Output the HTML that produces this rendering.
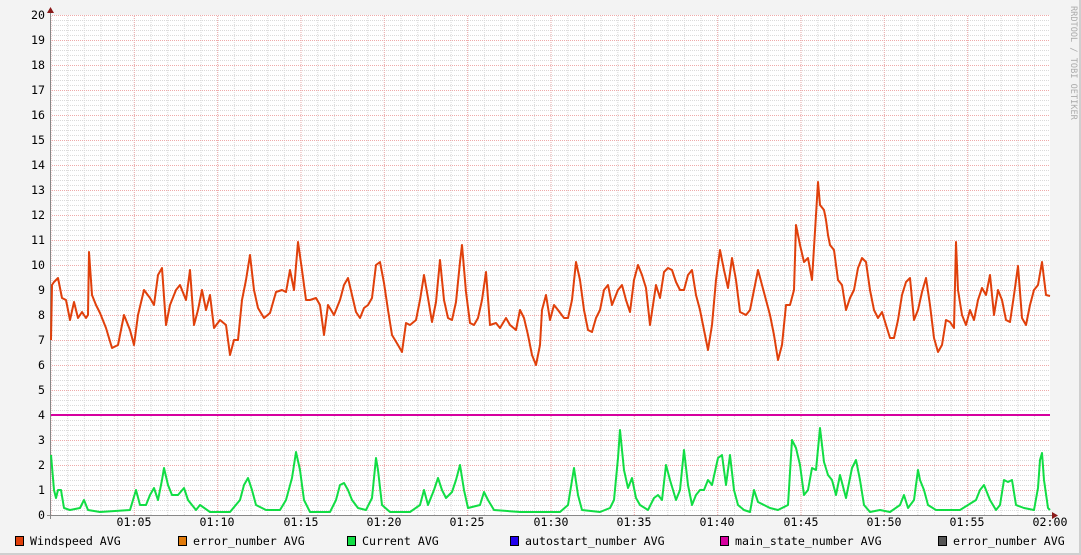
<!DOCTYPE html>
<html><head><meta charset="utf-8"><style>
html,body{margin:0;padding:0;background:#f3f3f3}
svg{display:block}
text{font-family:"DejaVu Sans Mono","Liberation Mono",monospace;font-size:11.6px;fill:#000}
</style></head><body>
<svg width="1081" height="555" viewBox="0 0 1081 555" xmlns="http://www.w3.org/2000/svg">
<defs>
<pattern id="hmin" x="0" y="15" width="1000" height="5" patternUnits="userSpaceOnUse"><line x1="0" y1="0.5" x2="1000" y2="0.5" stroke="#dadada" stroke-width="1" stroke-dasharray="1,1"/></pattern>
<pattern id="vmin" x="50.5" y="0" width="16.67" height="600" patternUnits="userSpaceOnUse"><line x1="0.5" y1="0" x2="0.5" y2="600" stroke="#dadada" stroke-width="1" stroke-dasharray="1,1"/></pattern>
<pattern id="hmaj" x="0" y="15" width="1000" height="25" patternUnits="userSpaceOnUse"><line x1="0" y1="0.5" x2="1000" y2="0.5" stroke="#eeaaaa" stroke-width="1" stroke-dasharray="1,1"/></pattern>
<pattern id="vmaj" x="50.5" y="0" width="83.33" height="600" patternUnits="userSpaceOnUse"><line x1="0.5" y1="0" x2="0.5" y2="600" stroke="#eeaaaa" stroke-width="1" stroke-dasharray="1,1"/></pattern>
</defs>
<rect x="0" y="0" width="1081" height="555" fill="#f3f3f3"/>
<line x1="1080" y1="0" x2="1080" y2="555" stroke="#cfcfcf" stroke-width="2"/>
<line x1="0" y1="554" x2="1081" y2="554" stroke="#cfcfcf" stroke-width="2"/>
<rect x="51" y="15" width="999" height="500" fill="#fff"/>
<rect x="51" y="15" width="999" height="500" fill="url(#hmin)"/>
<rect x="51" y="15" width="999" height="500" fill="url(#vmin)"/>
<rect x="51" y="15" width="999" height="500" fill="url(#hmaj)"/>
<rect x="51" y="15" width="999" height="500" fill="url(#vmaj)"/>
<g stroke="#888" stroke-width="1">
<line x1="50.5" y1="10" x2="50.5" y2="519"/>
<line x1="47" y1="515.5" x2="1054" y2="515.5"/>
</g>
<polygon points="47,13 54,13 50.5,7" fill="#8b1a1a"/>
<polygon points="1052,512 1052,519 1058,515.5" fill="#8b1a1a"/>
<g text-anchor="end">
<text x="45" y="19">20</text><text x="45" y="44">19</text><text x="45" y="69">18</text><text x="45" y="94">17</text><text x="45" y="119">16</text><text x="45" y="144">15</text><text x="45" y="169">14</text><text x="45" y="194">13</text><text x="45" y="219">12</text><text x="45" y="244">11</text><text x="45" y="269">10</text><text x="45" y="294">9</text><text x="45" y="319">8</text><text x="45" y="344">7</text><text x="45" y="369">6</text><text x="45" y="394">5</text><text x="45" y="419">4</text><text x="45" y="444">3</text><text x="45" y="469">2</text><text x="45" y="494">1</text><text x="45" y="519">0</text>
</g>
<g text-anchor="middle">
<text x="134" y="526">01:05</text><text x="217" y="526">01:10</text><text x="301" y="526">01:15</text><text x="384" y="526">01:20</text><text x="467" y="526">01:25</text><text x="551" y="526">01:30</text><text x="634" y="526">01:35</text><text x="717" y="526">01:40</text><text x="801" y="526">01:45</text><text x="884" y="526">01:50</text><text x="967" y="526">01:55</text><text x="1050" y="526">02:00</text>
</g>
<line x1="51" y1="415" x2="1050" y2="415" stroke="#d6009f" stroke-width="2"/>
<polyline fill="none" stroke="#e0400b" stroke-width="2" stroke-linejoin="round" points="51,340 52,285 54,282 58,278 62,298 66,300 70,320 74,302 78,318 82,312 86,318 88,315 89,252 92,295 96,305 100,313 106,328 112,348 118,345 124,315 130,330 134,345 138,315 144,290 150,298 154,305 158,275 162,268 166,325 170,305 176,290 180,285 186,300 190,270 194,325 198,310 202,290 206,310 210,295 214,328 220,320 226,325 230,355 234,340 238,340 242,300 246,280 250,255 254,290 258,308 264,318 270,313 276,292 282,290 286,292 290,270 294,290 298,242 302,270 306,300 310,300 316,298 320,305 324,335 328,305 334,315 340,300 344,285 348,278 352,295 356,312 360,318 364,308 368,305 372,298 376,265 380,262 384,283 388,310 392,335 398,345 402,352 406,323 410,325 416,320 420,300 424,275 428,298 432,322 436,302 440,260 444,300 448,318 452,320 456,302 460,262 462,245 466,292 470,323 474,325 478,318 482,300 486,272 490,325 496,323 500,328 506,318 510,325 516,330 520,310 524,318 528,335 532,355 536,365 540,345 542,310 546,295 550,320 554,305 558,310 564,318 568,318 572,300 576,262 580,280 584,310 588,330 592,332 596,318 600,310 604,290 608,285 612,305 618,290 622,285 626,300 630,312 634,280 638,265 642,275 646,288 650,325 656,285 660,298 664,272 668,268 672,270 676,282 680,290 684,290 688,275 692,270 696,295 700,310 704,330 708,350 712,325 716,280 720,250 724,270 728,288 732,258 736,280 740,312 746,315 750,310 754,290 758,270 762,285 766,300 770,315 774,335 778,360 782,345 786,305 790,305 794,290 796,225 800,245 804,262 808,258 812,280 816,215 818,182 820,205 824,210 826,220 828,235 830,245 834,250 838,280 842,285 846,310 850,298 854,290 858,268 862,258 866,262 870,290 874,310 878,318 882,312 886,325 890,338 894,338 898,320 902,295 906,282 910,278 914,320 918,310 922,292 926,278 930,305 934,338 938,352 942,345 946,320 950,322 954,328 956,242 958,290 962,315 966,325 970,310 974,320 978,300 982,288 986,295 990,275 994,315 998,290 1002,300 1006,320 1010,322 1014,295 1018,266 1022,318 1026,325 1030,305 1034,290 1038,285 1042,262 1046,295 1050,296"/>
<polyline fill="none" stroke="#11dd44" stroke-width="2" stroke-linejoin="round" points="51,455 54,490 56,498 58,490 61,490 64,508 70,510 80,508 84,500 88,510 100,512 130,510 136,490 140,505 146,505 150,495 154,488 158,500 162,480 164,468 168,485 172,495 178,495 184,488 188,500 196,510 200,505 210,512 230,512 240,500 244,485 248,478 252,490 256,505 266,510 280,510 286,500 292,478 296,452 300,470 304,500 310,512 330,512 336,500 340,485 344,483 348,490 352,500 358,508 366,510 372,498 376,458 378,470 382,505 390,512 410,512 420,505 424,490 428,505 434,490 438,478 442,490 446,498 452,492 456,480 460,465 464,490 468,508 480,505 484,492 488,500 494,510 520,512 540,512 560,512 568,505 574,468 578,495 582,510 600,512 610,508 614,500 618,458 620,430 624,470 628,488 632,478 636,498 640,505 648,510 654,498 658,495 662,500 666,465 670,480 676,500 680,490 684,450 688,485 692,505 696,495 700,490 704,490 708,480 712,485 718,458 722,455 726,485 730,455 734,490 738,505 744,510 750,512 754,490 758,502 764,505 770,508 778,510 788,505 792,440 796,448 800,465 804,495 808,490 812,468 816,470 820,428 824,462 828,475 832,480 836,495 840,475 846,498 852,468 856,460 860,480 864,505 870,512 880,510 890,512 900,505 904,495 908,508 914,500 918,470 920,480 924,490 928,505 936,510 960,510 976,500 980,490 984,485 990,500 996,510 1000,505 1004,480 1008,482 1012,480 1016,505 1024,508 1034,510 1038,488 1040,460 1042,453 1044,480 1048,508 1050,510"/>
<text x="1071" y="6" transform="rotate(90 1071 6)" style="font-size:8.6px;fill:#aaa">RRDTOOL / TOBI OETIKER</text>
<g stroke="#000" stroke-width="1">
<rect x="15.5" y="536.5" width="8" height="9" fill="#e0400b"/>
<rect x="178.5" y="536.5" width="8" height="9" fill="#e07a0b"/>
<rect x="347.5" y="536.5" width="8" height="9" fill="#11dd44"/>
<rect x="510.5" y="536.5" width="8" height="9" fill="#2200ee"/>
<rect x="720.5" y="536.5" width="8" height="9" fill="#d6009f"/>
<rect x="938.5" y="536.5" width="8" height="9" fill="#555"/>
</g>
<text x="30" y="545">Windspeed AVG</text>
<text x="193" y="545">error_number AVG</text>
<text x="362" y="545">Current AVG</text>
<text x="525" y="545">autostart_number AVG</text>
<text x="735" y="545">main_state_number AVG</text>
<text x="953" y="545">error_number AVG</text>
</svg>
</body></html>
